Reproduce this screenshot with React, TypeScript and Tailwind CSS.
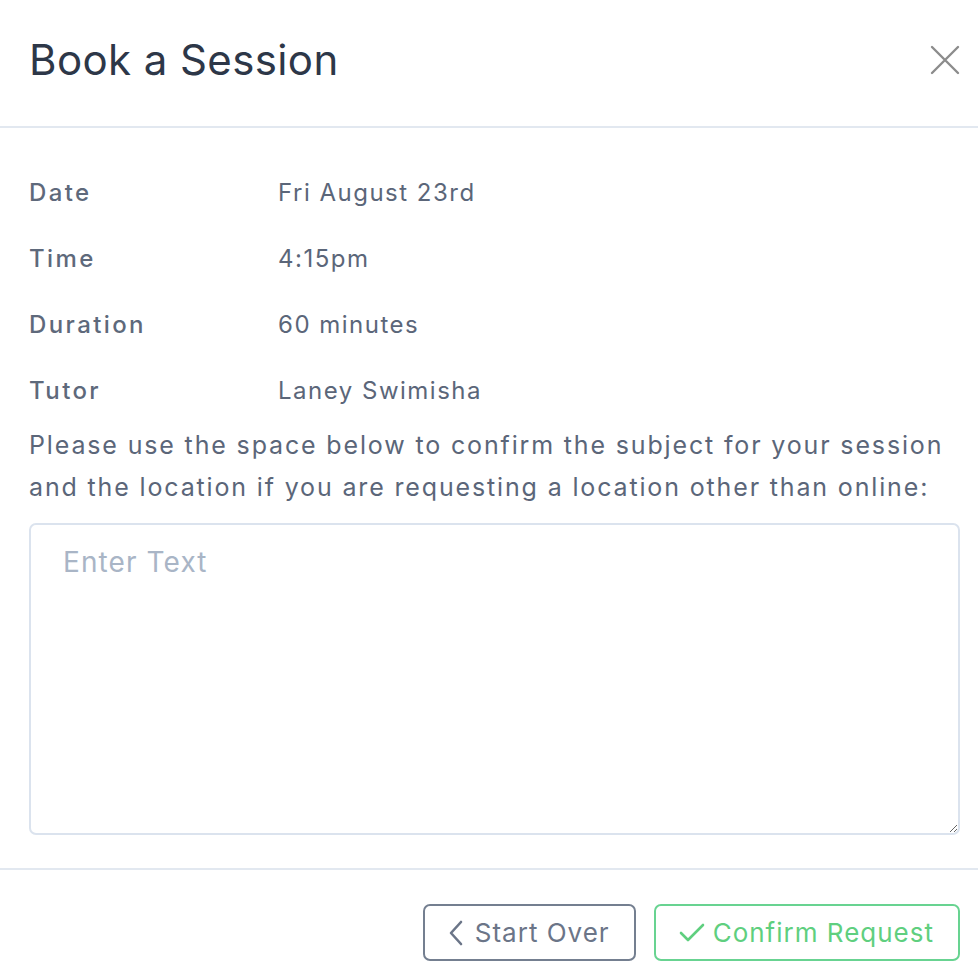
import { useState } from 'react';

const details = [
  { label: 'Date', value: 'Fri August 23rd' },
  { label: 'Time', value: '4:15pm' },
  { label: 'Duration', value: '60 minutes' },
  { label: 'Tutor', value: 'Laney Swimisha' },
];

export default function App() {
  const [note, setNote] = useState('');

  return (
    <div className="w-[978px] h-[976px] bg-white font-['Inter',sans-serif] overflow-hidden">
      <div className="flex items-center justify-between h-[128px] pb-[6px] pl-[29px] pr-[18px] border-b-2 border-[#e2e8f0]">
        <h1 className="text-[42px] leading-none text-[#2d3748] tracking-[0.4px]">Book a Session</h1>
        <button className="text-[#8c8c8c]">
          <svg width="30" height="30" viewBox="0 0 30 30" fill="none" stroke="currentColor" strokeWidth="2.4" strokeLinecap="round">
            <path d="M2 2 L28 28 M28 2 L2 28" />
          </svg>
        </button>
      </div>

      <div className="pl-[29px] pr-[18px] pt-[32px] pb-[33px]">
        {details.map((d) => (
          <div key={d.label} className="flex items-center h-[66px] text-[24px] tracking-[1.5px]">
            <span className="w-[249px] font-medium tracking-[2.4px] text-[#5e697b]">{d.label}</span>
            <span className="text-[#5b6679]">{d.value}</span>
          </div>
        ))}
        <p className="text-[25px] leading-[42px] tracking-[1.85px] text-[#5b6679]">
          Please use the space below to confirm the subject for your session and the location if you are
          requesting a location other than online:
        </p>
        <textarea
          value={note}
          onChange={(e) => setNote(e.target.value)}
          placeholder="Enter Text"
          className="mt-[15px] block w-full h-[312px] rounded-[7px] border-2 border-[#dbe3ee] px-[32px] py-[16px] text-[28px] tracking-[1.1px] text-[#2d3748] placeholder:text-[#a9b5c6] outline-none"
        />
      </div>

      <div className="flex justify-end gap-[18px] border-t-2 border-[#e2e8f0] pt-[34px] pl-[29px] pr-[18px]">
        <button className="flex items-center gap-[11px] h-[57px] pl-[23px] pr-[24px] rounded-[7px] border-2 border-[#747f90] text-[26px] tracking-[1px] text-[#6b7588]">
          <svg width="16" height="26" viewBox="0 0 16 26" fill="none" stroke="currentColor" strokeWidth="2.6" strokeLinecap="round" strokeLinejoin="round">
            <path d="M13 2 L3 13 L13 24" />
          </svg>
          Start Over
        </button>
        <button className="flex items-center gap-[8px] h-[57px] pl-[23px] pr-[24px] rounded-[7px] border-2 border-[#68d391] text-[26px] tracking-[1px] text-[#5fcf7f]">
          <svg width="26" height="22" viewBox="0 0 26 22" fill="none" stroke="currentColor" strokeWidth="2.6" strokeLinecap="round" strokeLinejoin="round">
            <path d="M2 11 L9 18 L24 3" />
          </svg>
          Confirm Request
        </button>
      </div>
    </div>
  );
}
